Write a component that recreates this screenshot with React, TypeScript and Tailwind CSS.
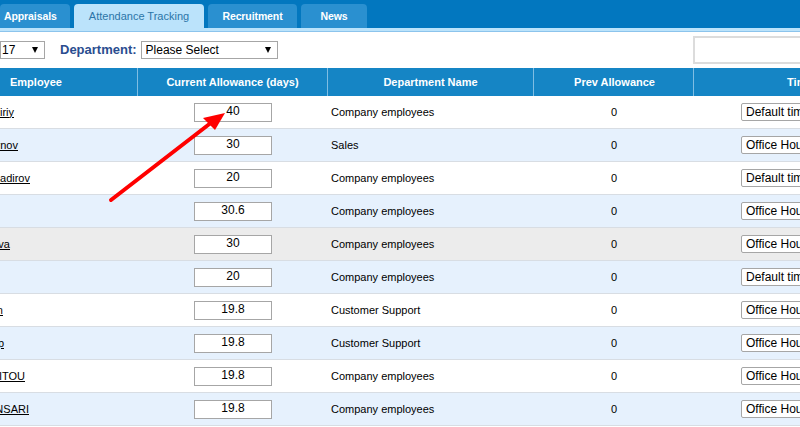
import type { ReactNode } from 'react';

const tabs = [
  { label: 'Appraisals', cls: 'w-[70px] pl-[4px] text-left' },
  { label: 'Attendance Tracking', cls: 'w-[130px] text-center', active: true },
  { label: 'Recruitment', cls: 'w-[89px] text-center' },
  { label: 'News', cls: 'w-[66px] text-center' },
];

// names are cut off by the left page edge, so each box ends where the text ends
const rows = [
  { name: 'Yuriy Shiriy', nameCls: 'w-[14px]', days: '40', dept: 'Company employees', policy: 'Default timesheet' },
  { name: 'Ivan Smirnov', nameCls: 'w-[18px]', days: '30', dept: 'Sales', policy: 'Office Hours' },
  { name: 'Rustam Kadirov', nameCls: 'w-[30px]', days: '20', dept: 'Company employees', policy: 'Default timesheet' },
  { name: '', nameCls: 'w-0', days: '30.6', dept: 'Company employees', policy: 'Office Hours' },
  { name: 'Elena Petrova', nameCls: 'w-[10px]', days: '30', dept: 'Company employees', policy: 'Office Hours', hover: true },
  { name: '', nameCls: 'w-0', days: '20', dept: 'Company employees', policy: 'Default timesheet' },
  { name: 'Susan', nameCls: 'w-[3px]', days: '19.8', dept: 'Customer Support', policy: 'Office Hours' },
  { name: 'Philip', nameCls: 'w-[4px]', days: '19.8', dept: 'Customer Support', policy: 'Office Hours' },
  { name: 'Karim AITOU', nameCls: 'w-[25px]', days: '19.8', dept: 'Company employees', policy: 'Office Hours' },
  { name: 'Samir ANSARI', nameCls: 'w-[29px]', days: '19.8', dept: 'Company employees', policy: 'Office Hours' },
];

function rowBg(i: number, hover?: boolean) {
  if (hover) return 'bg-[#ececec]';
  return i % 2 === 0 ? 'bg-white' : 'bg-[#e6f1fd]';
}

function FilterSelect({ className, pad, children }: { className: string; pad: string; children: ReactNode }) {
  return (
    <div className={`relative shrink-0 h-[18px] ${className}`}>
      <select className={`block w-full h-full appearance-none border border-[#a6a6a6] bg-white text-[12px] leading-[16px] font-['Liberation_Sans',Arial,sans-serif] ${pad}`}>
        {children}
      </select>
      <svg className="absolute right-[7px] top-[6px] pointer-events-none" width="6" height="6" viewBox="0 0 6 6">
        <path d="M0 0 H6 L3 6 Z" fill="#000" />
      </svg>
    </div>
  );
}

export default function App() {
  return (
    <div className="relative w-[800px] h-[427px] overflow-hidden bg-white text-black font-['Liberation_Sans',Arial,sans-serif]">
      {/* tab bar */}
      <div className="flex gap-[4px] h-[28px] pt-[4px] bg-[#0277bf]">
        {tabs.map((t) => (
          <div
            key={t.label}
            className={`h-[24px] rounded-t-[4px] leading-[24px] ${t.cls} ${
              t.active
                ? 'bg-[#bbe3fb] text-[#2b75a8] text-[11px] font-normal'
                : 'bg-[#2a90d0] text-white text-[10.5px] font-bold tracking-[-0.1px]'
            }`}
          >
            {t.label}
          </div>
        ))}
      </div>
      <div className="h-[4px] bg-[#bbe3fb] border-b border-[#8cc4ec]" />

      {/* filters */}
      <div className="flex items-center h-[36px]">
        <FilterSelect className="w-[45px]" pad="pl-[1px]">
          <option>17</option>
        </FilterSelect>
        <span className="ml-[15px] text-[13px] font-bold text-[#2a4d8f]">Department:</span>
        <FilterSelect className="ml-[4px] w-[137px]" pad="pl-[4px]">
          <option>Please Select</option>
        </FilterSelect>
        <div className="ml-[415px] w-[140px] h-[28px] shrink-0 border-2 border-[#dcdcdc] bg-white" />
      </div>

      {/* table */}
      <table className="table-fixed border-separate border-spacing-0 w-[960px]">
        <colgroup>
          <col className="w-[137px]" />
          <col className="w-[190px]" />
          <col className="w-[206px]" />
          <col className="w-[160px]" />
          <col className="w-[267px]" />
        </colgroup>
        <thead>
          <tr className="h-[28px] bg-[#1585c5] text-white text-[11px] font-bold">
            <th className="text-left pl-[10px] font-bold">Employee</th>
            <th className="border-l border-[#7fbde3] font-bold">Current Allowance (days)</th>
            <th className="border-l border-[#7fbde3] font-bold">Department Name</th>
            <th className="border-l border-[#7fbde3] pl-[2px] font-bold">Prev Allowance</th>
            <th className="border-l border-[#7fbde3] font-bold">Time Off Policy</th>
          </tr>
        </thead>
        <tbody>
          {rows.map((r, i) => (
            <tr key={i} className={`h-[33px] text-[11px] ${rowBg(i, r.hover)}`}>
              <td className="p-0 border-b border-[#d8dde3]">
                <a className={`flex justify-end whitespace-nowrap underline ${r.nameCls}`}>{r.name}</a>
              </td>
              <td className="p-0 border-b border-[#d8dde3]">
                <input
                  readOnly
                  value={r.days}
                  className="block ml-[57px] w-[78px] h-[19px] border border-[#a6a6a6] bg-white text-center text-[12px] leading-[15px] pb-[2px]"
                />
              </td>
              <td className="p-0 pl-[4px] border-b border-[#d8dde3]">{r.dept}</td>
              <td className="p-0 pl-[2px] text-center border-b border-[#d8dde3]">0</td>
              <td className="p-0 pl-[48px] border-b border-[#d8dde3]">
                <select
                  defaultValue={r.policy}
                  className="block w-[170px] h-[18px] pl-[4px] appearance-none border border-[#a6a6a6] rounded-[2px] bg-white text-[12px] leading-[16px] font-['Liberation_Sans',Arial,sans-serif]"
                >
                  <option>{r.policy}</option>
                </select>
              </td>
            </tr>
          ))}
        </tbody>
      </table>

      {/* annotation arrow */}
      <svg className="absolute left-0 top-0 pointer-events-none" width="800" height="427" viewBox="0 0 800 427" fill="none">
        <path d="M111 200 L212 122" stroke="#ff0000" strokeWidth="4" strokeLinecap="round" />
        <path d="M225 113 L203 118 L215 130 Z" fill="#ff0000" />
      </svg>
    </div>
  );
}
